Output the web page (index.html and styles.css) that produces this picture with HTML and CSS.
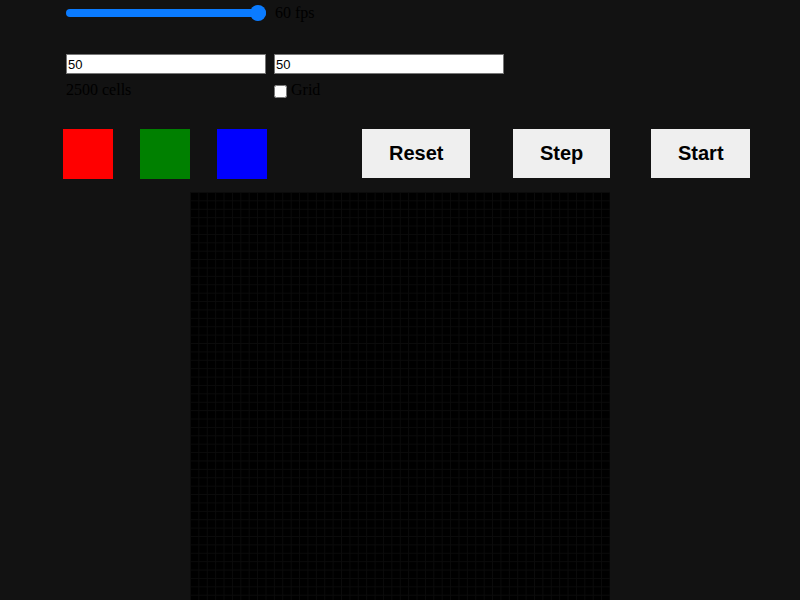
FILE: index.html
```html
<!DOCTYPE html>
<html lang="en">
<head>
<meta charset="utf-8">
<title>Life</title>
<link rel="stylesheet" href="styles.css">
</head>
<body>
<div class="viewport">
<div class="page">
  <div class="controls">
    <div class="row row-speed">
      <input class="speed" type="range" min="1" max="60" value="60">
      <span class="label">60 fps</span>
    </div>
    <div class="row row-size">
      <input class="num" type="text" value="50">
      <input class="num num-wide" type="text" value="50">
    </div>
    <div class="row row-info">
      <span class="label">2500 cells</span>
      <label class="check"><input type="checkbox"><span>Grid</span></label>
    </div>
  </div>
  <div class="toolbar">
    <div class="swatches">
      <div class="swatch red"></div>
      <div class="swatch green"></div>
      <div class="swatch blue"></div>
    </div>
    <button class="btn btn-reset">Reset</button>
    <button class="btn btn-step">Step</button>
    <button class="btn btn-start">Start</button>
  </div>
  <div class="board"></div>
</div>
</div>
</body>
</html>
```

FILE: styles.css
```css
html, body {
  margin: 0;
  padding: 0;
  background: #121212;
  overflow: hidden;
}
body {
  font-family: "Liberation Serif", serif;
  font-size: 16px;
  color: #000;
}
.viewport {
  width: 800px;
  height: 600px;
  overflow: scroll;
}
.viewport::-webkit-scrollbar {
  width: 16px;
  height: 16px;
  background: #f1f1f1;
}
.viewport::-webkit-scrollbar-track {
  background: #f1f1f1;
}
.viewport::-webkit-scrollbar-thumb {
  background: #c1c1c1;
  border: 2px solid #f1f1f1;
  border-left-width: 2px;
}
.viewport::-webkit-scrollbar-corner {
  background: #dcdcdc;
}
.viewport::-webkit-scrollbar-button:single-button {
  display: block;
  width: 16px;
  height: 16px;
  background-color: #f1f1f1;
  background-repeat: no-repeat;
  background-position: center;
}
.viewport::-webkit-scrollbar-button:single-button:vertical:decrement {
  background-image: linear-gradient(to top right, transparent 50%, #a3a3a3 50%), linear-gradient(to top left, transparent 50%, #a3a3a3 50%);
  background-size: 4px 4px, 4px 4px;
  background-position: 4px 6px, 8px 6px;
}
.viewport::-webkit-scrollbar-button:single-button:vertical:increment {
  background-image: linear-gradient(to bottom right, transparent 50%, #505050 50%), linear-gradient(to bottom left, transparent 50%, #505050 50%);
  background-size: 4px 4px, 4px 4px;
  background-position: 4px 6px, 8px 6px;
}
.viewport::-webkit-scrollbar-button:single-button:horizontal:decrement {
  background-image: linear-gradient(to bottom left, transparent 50%, #a3a3a3 50%), linear-gradient(to top left, transparent 50%, #a3a3a3 50%);
  background-size: 4px 4px, 4px 4px;
  background-position: 6px 4px, 6px 8px;
}
.viewport::-webkit-scrollbar-button:single-button:horizontal:increment {
  background-image: linear-gradient(to bottom right, transparent 50%, #505050 50%), linear-gradient(to top right, transparent 50%, #505050 50%);
  background-size: 4px 4px, 4px 4px;
  background-position: 6px 4px, 6px 8px;
}
.page {
  width: 800px;
  padding-bottom: 4px;
}
.controls {
  padding-left: 66px;
}
.row {
  display: grid;
  grid-template-columns: 200px 230px;
  column-gap: 8px;
  align-items: center;
}
.row-speed {
  height: 26px;
}
.label {
  line-height: 18px;
  padding-left: 1px;
}
.row-info .label {
  padding-left: 0;
}
.speed {
  -webkit-appearance: none;
  appearance: none;
  width: 200px;
  height: 16px;
  margin: 0;
  background: transparent;
}
.speed::-webkit-slider-runnable-track {
  height: 8px;
  border-radius: 4px;
  background: #0a7bff;
}
.speed::-webkit-slider-thumb {
  -webkit-appearance: none;
  width: 16px;
  height: 16px;
  border-radius: 50%;
  background: #0a7bff;
  margin-top: -4px;
}
.row-size {
  margin-top: 28px;
}
.num {
  box-sizing: border-box;
  width: 200px;
  height: 20px;
  margin: 0;
  padding: 0 1px;
  border: 1px solid #767676;
  background: #fff;
  font-family: "Liberation Sans", Arial, sans-serif;
  font-size: 13px;
  color: #000;
}
.num-wide {
  width: 230px;
}
.row-info {
  margin-top: 7px;
  height: 18px;
}
.check {
  display: flex;
  align-items: center;
  line-height: 18px;
}
.check input {
  width: 13px;
  height: 13px;
  margin: 2px 4px 0 0;
}
.toolbar {
  display: flex;
  align-items: flex-start;
  margin-top: 30px;
  padding-left: 63px;
}
.swatches {
  display: flex;
  gap: 27px;
}
.swatch {
  width: 50px;
  height: 50px;
}
.red { background: #ff0000; }
.green { background: #008000; }
.blue { background: #0000ff; }
.btn {
  height: 49px;
  padding: 0 27px;
  border: none;
  background: #efefef;
  font-family: "Liberation Sans", Arial, sans-serif;
  font-weight: bold;
  font-size: 20px;
  color: #000;
}
.btn-reset { margin-left: 95px; width: 108px; }
.btn-step { margin-left: 43px; width: 97px; }
.btn-start { margin-left: 41px; width: 99px; }
.board {
  width: 420px;
  height: 420px;
  margin: 13px auto 0;
  background-color: #000;
  background-image:
    linear-gradient(to right, #0b0b0b 1px, transparent 1px),
    linear-gradient(to bottom, #0b0b0b 1px, transparent 1px);
  background-size: 8.4px 8.4px;
}
```
